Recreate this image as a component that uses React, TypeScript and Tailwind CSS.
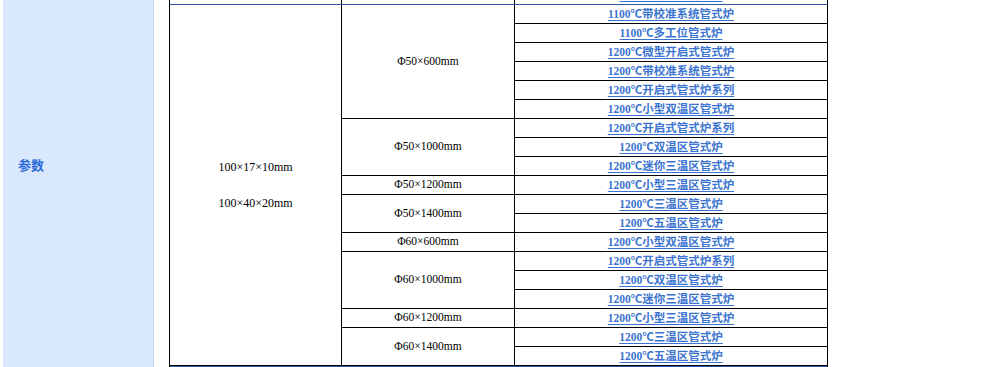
import React from "react";

const links = [
  "1100℃带校准系统管式炉",
  "1100℃多工位管式炉",
  "1200℃微型开启式管式炉",
  "1200℃带校准系统管式炉",
  "1200℃开启式管式炉系列",
  "1200℃小型双温区管式炉",
  "1200℃开启式管式炉系列",
  "1200℃双温区管式炉",
  "1200℃迷你三温区管式炉",
  "1200℃小型三温区管式炉",
  "1200℃三温区管式炉",
  "1200℃五温区管式炉",
  "1200℃小型双温区管式炉",
  "1200℃开启式管式炉系列",
  "1200℃双温区管式炉",
  "1200℃迷你三温区管式炉",
  "1200℃小型三温区管式炉",
  "1200℃三温区管式炉",
  "1200℃五温区管式炉",
];

const sizeHeight: Record<number, string> = {
  1: "h-[18px]",
  2: "h-[37px]",
  3: "h-[56px]",
  6: "h-[113px]",
};

const groups: [string, number][] = [
  ["Φ50×600mm", 6],
  ["Φ50×1000mm", 3],
  ["Φ50×1200mm", 1],
  ["Φ50×1400mm", 2],
  ["Φ60×600mm", 1],
  ["Φ60×1000mm", 3],
  ["Φ60×1200mm", 1],
  ["Φ60×1400mm", 2],
];

const serif = "font-['Liberation_Serif','Noto_Sans_CJK_SC',serif]";

function LinkCell({ text }: { text: string }) {
  return (
    <div className="h-[18px] bg-white flex items-center justify-center">
      <a
        href="#"
        className={`${serif} text-[11.5px] leading-[18px] font-bold text-[#3b74d0] underline underline-offset-[2px]`}
      >
        {text}
      </a>
    </div>
  );
}

export default function App() {
  return (
    <div className="flex h-[367px] w-[985px] overflow-hidden bg-white">
      <div className="ml-[3px] w-[151px] shrink-0 bg-[#dae8fe] border-r border-dotted border-[#b8c6dc] pl-[15px] pt-[156px]">
        <div className="font-['Noto_Sans_CJK_SC',sans-serif] text-[13px] leading-[18px] font-bold text-[#2c68d6]">
          参数
        </div>
      </div>
      <div className="ml-[15px] w-[659px] shrink-0 border-x border-black overflow-hidden">
        <div className="-mt-[14px]">
          <div className="flex gap-px bg-black h-[18px]">
            <div className="w-[171px] bg-white" />
            <div className="w-[172px] bg-white" />
            <div className="w-[312px]">
              <LinkCell text="1100℃开启式管式炉" />
            </div>
          </div>
          <div className="h-px bg-[#2c58a6]" />
          <div className="flex gap-px bg-black">
            <div
              className={`w-[171px] bg-white flex flex-col items-center justify-center ${serif} text-[12px] leading-[18px] text-black`}
            >
              <div>100×17×10mm</div>
              <div>&nbsp;</div>
              <div>100×40×20mm</div>
            </div>
            <div className="w-[172px] flex flex-col gap-px">
              {groups.map(([label, span], i) => (
                <div
                  key={i}
                  className={`${sizeHeight[span]} bg-white flex items-center justify-center ${serif} text-[11.5px] text-black`}
                >
                  {label}
                </div>
              ))}
            </div>
            <div className="w-[312px] flex flex-col gap-px">
              {links.map((t, i) => (
                <LinkCell key={i} text={t} />
              ))}
            </div>
          </div>
          <div className="h-px bg-black" />
          <div className="h-px bg-[#2c58a6]" />
        </div>
      </div>
    </div>
  );
}
